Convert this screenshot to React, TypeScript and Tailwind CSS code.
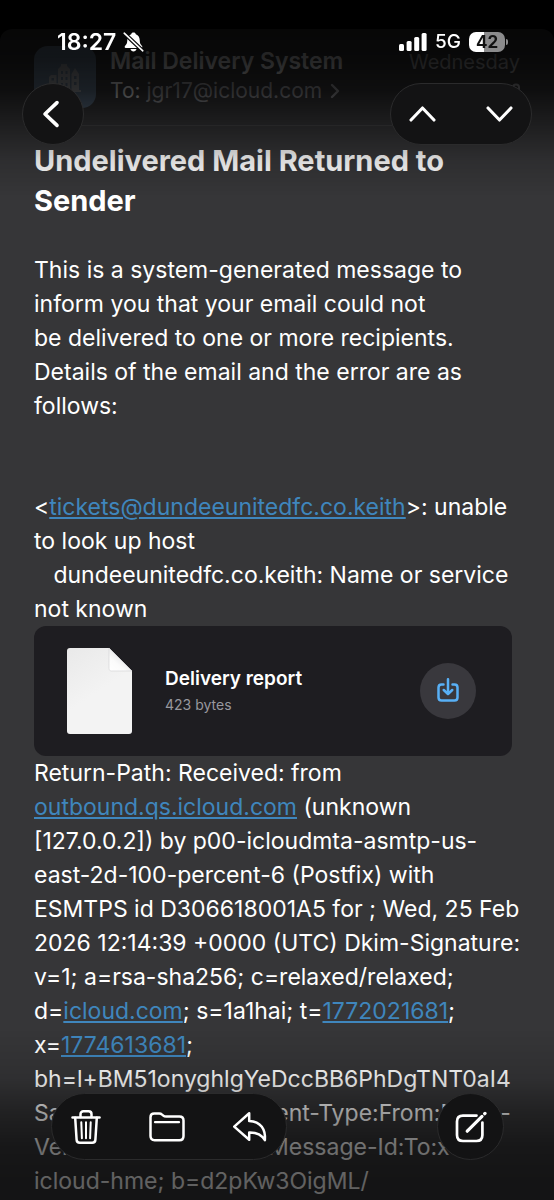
import type { ReactNode } from 'react';

const ReportLink = ({ href, children }: { href: string; children: ReactNode }) => (
    <a href={href} className="text-[#3f86bd] underline decoration-2 underline-offset-2">
        {children}
    </a>
);

function StatusBar() {
    return (
        <div className="flex h-6 items-center justify-between pl-[57px] pr-[46px] text-white">
            <div className="flex items-center gap-[7px]">
                <span className="text-[23px] leading-6 font-semibold">18:27</span>
                <svg width="21" height="22" viewBox="0 0 21 22" aria-label="Silent mode">
                    <path
                        d="M10.5 1.5C11.8 1.5 12.6 2.2 12.8 3.2C15.5 4.2 16.6 6.5 16.7 9C16.8 12.5 17.5 13.3 19 15C19.7 15.9 19.4 17 18.2 17H2.8C1.6 17 1.3 15.9 2 15C3.5 13.3 4.2 12.5 4.3 9C4.4 6.5 5.5 4.2 8.2 3.2C8.4 2.2 9.2 1.5 10.5 1.5ZM7.5 18H13.5C13.2 19.6 12 20.5 10.5 20.5C9 20.5 7.8 19.6 7.5 18Z"
                        fill="currentColor"
                    />
                    <path d="M1.5 2.5L20 20" stroke="#0a0a0b" strokeWidth="4" />
                    <path d="M1.2 2.2L19.8 19.8" stroke="currentColor" strokeWidth="1.6" strokeLinecap="round" />
                </svg>
            </div>
            <div className="flex items-center">
                <svg width="28" height="18" viewBox="0 0 28 18" fill="currentColor" aria-label="Signal">
                    <rect x="0" y="11" width="5" height="7" rx="1.5" />
                    <rect x="7.6" y="8" width="5" height="10" rx="1.5" />
                    <rect x="15.2" y="4" width="5" height="14" rx="1.5" />
                    <rect x="22.6" y="0" width="5" height="18" rx="1.5" />
                </svg>
                <span className="ml-2 text-[19px] leading-6 font-medium">5G</span>
                <div className="ml-2 flex h-5 w-9 items-center justify-center rounded-[7px] bg-linear-to-r from-white from-42% to-[#8b8b8c] to-42% text-[17px] leading-5 font-bold text-[#111]">
                    42
                </div>
                <div className="ml-px h-[6px] w-[2px] rounded-r-full bg-[#8b8b8c]" />
            </div>
        </div>
    );
}

const glass = 'border border-[#2b2b2c] bg-[#131314] text-white';

function TopControls() {
    return (
        <header className="fixed inset-x-0 top-0 z-20 pt-[30px]">
            <StatusBar />
            <nav className="mt-[29px] flex items-center justify-between pr-[22px] pl-[22px]">
                <button aria-label="Back" className={`${glass} flex size-[62px] items-center justify-center rounded-full`}>
                    <svg className="mr-1" width="18" height="28" viewBox="0 0 18 28" fill="none" stroke="currentColor" strokeWidth="3.6" strokeLinecap="round" strokeLinejoin="round">
                        <path d="M15 2.6L3 14L15 25.4" />
                    </svg>
                </button>
                <div className={`${glass} flex h-[62px] w-[142px] items-center justify-between rounded-full px-[18px]`}>
                    <button aria-label="Previous message">
                        <svg width="27" height="18" viewBox="0 0 27 18" fill="none" stroke="currentColor" strokeWidth="3.1" strokeLinecap="round" strokeLinejoin="round">
                            <path d="M2 15L13.5 3L25 15" />
                        </svg>
                    </button>
                    <button aria-label="Next message">
                        <svg width="27" height="18" viewBox="0 0 27 18" fill="none" stroke="currentColor" strokeWidth="3.1" strokeLinecap="round" strokeLinejoin="round">
                            <path d="M2 3L13.5 15L25 3" />
                        </svg>
                    </button>
                </div>
            </nav>
        </header>
    );
}

function BottomToolbar() {
    return (
        <footer className="fixed inset-x-0 bottom-[40px] z-20 flex items-center justify-between pr-[50px] pl-[51px]">
            <div className={`${glass} flex h-[67px] w-[236px] items-center justify-between rounded-full px-[18px]`}>
                <button aria-label="Delete">
                    <svg width="32" height="36" viewBox="0 0 32 36" fill="none" stroke="currentColor" strokeWidth="2.5" strokeLinecap="round" strokeLinejoin="round">
                        <path d="M2.5 8.5H29.5" />
                        <path d="M10.5 8V5.2C10.5 3.4 11.7 2.3 13.4 2.3H18.6C20.3 2.3 21.5 3.4 21.5 5.2V8" />
                        <path d="M5.2 8.8L6.6 30.6C6.7 32.6 7.9 33.8 9.8 33.8H22.2C24.1 33.8 25.3 32.6 25.4 30.6L26.8 8.8" />
                        <path d="M11.3 13.2L11.9 29.2M16 13.2V29.2M20.7 13.2L20.1 29.2" strokeWidth="2" />
                    </svg>
                </button>
                <button aria-label="Move to folder">
                    <svg width="36" height="30" viewBox="0 0 36 30" fill="none" stroke="currentColor" strokeWidth="2.5" strokeLinecap="round" strokeLinejoin="round">
                        <path d="M1.5 24V5.2C1.5 2.8 2.8 1.5 5.2 1.5H10.2C11.5 1.5 12.2 1.8 13.1 2.6L14.3 3.6C15.2 4.4 15.9 4.6 17.1 4.6H30.4C33 4.6 34.5 6 34.5 8.6V24C34.5 26.8 33 28.3 30.4 28.3H5.6C3 28.3 1.5 26.8 1.5 24Z" />
                        <path d="M6 10.2H30" strokeWidth="2.2" />
                    </svg>
                </button>
                <button aria-label="Reply">
                    <svg width="36" height="32" viewBox="0 0 36 32" fill="none" stroke="currentColor" strokeWidth="2.5" strokeLinejoin="round">
                        <path d="M17.2 2.3L2.2 15.6L17.2 28.8V21.4C24.5 21.2 29.5 23.2 32.9 29.2C33.8 18.5 29 10.5 17.2 9.9Z" />
                    </svg>
                </button>
            </div>
            <button aria-label="Compose" className={`${glass} flex size-[67px] items-center justify-center rounded-full`}>
                <svg width="32" height="32" viewBox="0 0 32 32" fill="none" stroke="currentColor" strokeWidth="2.7" strokeLinecap="round">
                    <path d="M21.5 4.6H8C4.3 4.6 2 6.9 2 10.6V24C2 27.7 4.3 30 8 30H21.4C25.1 30 27.4 27.7 27.4 24V11.5" />
                    <path d="M27 5.4L14 18.3L12.2 20.2" strokeWidth="3.2" />
                    <path d="M29.7 2.7L30 2.4" strokeWidth="3.2" />
                </svg>
            </button>
        </footer>
    );
}

function SenderRow() {
    return (
        <div className="flex gap-[14px]">
            <div className="flex size-[62px] shrink-0 items-center justify-center rounded-[14px] bg-linear-to-b from-[#6f8298] to-[#56697d] text-[#9a9da2]">
                <svg width="34" height="30" viewBox="0 0 34 30" fill="currentColor" aria-hidden="true">
                    <path fillRule="evenodd" d="M10 29V7L13 4V2H19V4L22 7V29ZM13 9V12H15V9ZM17.5 9V12H19.5V9ZM13 15V18H15V15ZM17.5 15V18H19.5V15ZM13 21V24H15V21ZM17.5 21V24H19.5V21Z" />
                    <path fillRule="evenodd" d="M1 29V15L3 13H8.5V29ZM3.5 16V18.5H6V16ZM3.5 21.5V24H6V21.5Z" />
                    <path fillRule="evenodd" d="M23.5 29V12L27 6L31 12V29ZM26 14V17H28.5V14ZM26 20V23H28.5V20Z" />
                    <path d="M0 28H33V30H0Z" />
                </svg>
            </div>
            <div className="flex-1 leading-[30px] whitespace-nowrap">
                <div className="flex items-baseline justify-between">
                    <span className="text-[23px] font-semibold text-[#dcdcde]">Mail Delivery System</span>
                    <span className="text-xl text-[#a0a0a4]">Wednesday</span>
                </div>
                <div className="flex items-center text-[21px] text-[#98989d]">
                    <span>
                        <span className="text-[#d6d6d9]">To:</span> jgr17@icloud.com
                    </span>
                    <svg className="ml-2" width="10" height="16" viewBox="0 0 10 16" fill="none" stroke="currentColor" strokeWidth="2.4" strokeLinecap="round" strokeLinejoin="round">
                        <path d="M2 2L8 8L2 14" />
                    </svg>
                    <svg className="ml-auto" width="8" height="16" viewBox="0 0 8 16" fill="none" stroke="currentColor" strokeWidth="2">
                        <path d="M1 11V4.5C1 0.5 7 0.5 7 4.5V11C7 15 1 15 1 11" />
                    </svg>
                </div>
            </div>
        </div>
    );
}

function Attachment() {
    return (
        <div className="mr-2 flex h-[130px] items-center rounded-xl bg-[#1e1d21] pr-9 pl-8">
            <svg width="67" height="88" viewBox="0 0 67 88" aria-hidden="true">
                <defs>
                    <linearGradient id="paper" x1="0" y1="0" x2="0.5" y2="1">
                        <stop offset="0" stopColor="#e9e9e9" />
                        <stop offset="0.6" stopColor="#f3f3f3" />
                        <stop offset="1" stopColor="#f3f3f3" />
                    </linearGradient>
                    <linearGradient id="fold" x1="0.6" y1="0.3" x2="0" y2="1">
                        <stop offset="0" stopColor="#e4e4e6" />
                        <stop offset="0.5" stopColor="#fbfbfb" />
                        <stop offset="1" stopColor="#ffffff" />
                    </linearGradient>
                </defs>
                <path d="M4 1H43L66 24V84C66 86 65 87 63 87H4C2 87 1 86 1 84V4C1 2 2 1 4 1Z" fill="url(#paper)" />
                <path d="M43 1L66 24H45.5C44 24 43 23 43 21.5Z" fill="url(#fold)" stroke="#d5d5d7" strokeWidth="0.7" />
            </svg>
            <div className="ml-8 flex-1">
                <p className="text-[19px] leading-7 font-semibold text-white">Delivery report</p>
                <p className="text-sm leading-6 text-[#98989e]">423 bytes</p>
            </div>
            <button aria-label="Download attachment" className="flex size-14 items-center justify-center rounded-full bg-[#39383d] text-[#58b0f6]">
                <svg width="22" height="26" viewBox="0 0 22 26" fill="none" stroke="currentColor" strokeWidth="2.5" strokeLinecap="round" strokeLinejoin="round">
                    <path d="M6.5 6.5H4.5C2.6 6.5 1.5 7.6 1.5 9.5V19.5C1.5 21.4 2.6 22.5 4.5 22.5H17.5C19.4 22.5 20.5 21.4 20.5 19.5V9.5C20.5 7.6 19.4 6.5 17.5 6.5H15.5" />
                    <path d="M11 1.2V16M6.8 12L11 16.2L15.2 12" />
                </svg>
            </button>
        </div>
    );
}

export default function App() {
    return (
        <div className="min-h-screen bg-black pt-[29px] font-['Inter','Liberation_Sans',sans-serif]">
            <TopControls />

            <main className="min-h-[calc(100vh-29px)] overflow-hidden rounded-t-xl bg-[#363638] px-[34px] pt-[17px] text-white">
                <SenderRow />

                <h1 className="mt-[17px] border-t border-[#444446] pt-[15px] text-[29px] leading-10 font-bold">
                    Undelivered Mail Returned to
                    <br />
                    Sender
                </h1>

                <article className="mt-8 text-[23px] leading-[34px] whitespace-nowrap">
                    <p>
                        This is a system-generated message to
                        <br />
                        inform you that your email could not
                        <br />
                        be delivered to one or more recipients.
                        <br />
                        Details of the email and the error are as
                        <br />
                        follows:
                    </p>
                    <p className="mt-[67px]">
                        &lt;<ReportLink href="mailto:tickets@dundeeunitedfc.co.keith">tickets@dundeeunitedfc.co.keith</ReportLink>&gt;: unable
                        <br />
                        to look up host
                        <br />
                        &nbsp;&nbsp; dundeeunitedfc.co.keith: Name or service
                        <br />
                        not known
                    </p>

                    <Attachment />

                    <p>
                        Return-Path: Received: from
                        <br />
                        <ReportLink href="http://outbound.qs.icloud.com">outbound.qs.icloud.com</ReportLink> (unknown
                        <br />
                        [127.0.0.2]) by p00-icloudmta-asmtp-us-
                        <br />
                        east-2d-100-percent-6 (Postfix) with
                        <br />
                        ESMTPS id D306618001A5 for ; Wed, 25 Feb
                        <br />
                        2026 12:14:39 +0000 (UTC) Dkim-Signature:
                        <br />
                        v=1; a=rsa-sha256; c=relaxed/relaxed;
                        <br />
                        d=<ReportLink href="http://icloud.com">icloud.com</ReportLink>; s=1a1hai; t=<ReportLink href="tel:1772021681">1772021681</ReportLink>;
                        <br />
                        x=<ReportLink href="tel:1774613681">1774613681</ReportLink>;
                        <br />
                        bh=l+BM51onyghlgYeDccBB6PhDgTNT0aI4
                        <br />
                        Sa9Hk2sWo=; h=Content-Type:From:Mime-
                        <br />
                        Version:Subject:Date:Message-Id:To:x-
                        <br />
                        icloud-hme; b=d2pKw3OigML/
                    </p>
                </article>
            </main>

            {/* fades under the floating controls */}
            <div className="pointer-events-none fixed inset-x-0 top-0 z-10 h-[210px] bg-[linear-gradient(to_bottom,rgba(0,0,0,0.87)_29px,rgba(0,0,0,0.83)_60px,rgba(0,0,0,0.73)_90px,rgba(0,0,0,0.4)_130px,rgba(0,0,0,0.15)_160px,transparent_195px)]" />
            <div className="pointer-events-none fixed inset-x-0 bottom-0 z-10 h-[170px] bg-[linear-gradient(to_bottom,transparent,rgba(0,0,0,0.12)_48px,rgba(0,0,0,0.38)_82px,rgba(0,0,0,0.56)_116px,rgba(0,0,0,0.62)_150px)]" />

            <BottomToolbar />
        </div>
    );
}
